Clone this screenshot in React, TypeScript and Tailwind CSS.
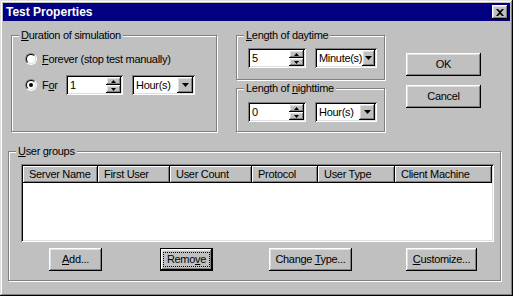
import React from 'react';

const raised =
  'shadow-[inset_-1px_-1px_#000,inset_1px_1px_#fff,inset_-2px_-2px_#808080,inset_2px_2px_#dfdfdf]';
const sunken =
  'shadow-[inset_1px_1px_#808080,inset_-1px_-1px_#fff,inset_2px_2px_#000,inset_-2px_-2px_#dfdfdf]';
const etched = 'border border-[#808080] shadow-[1px_1px_0_#fff,inset_1px_1px_0_#fff]';

const Group: React.FC<{ label: React.ReactNode; className: string; children?: React.ReactNode }> = ({
  label,
  className,
  children,
}) => (
  <div className={`relative ${etched} ${className}`}>
    <span className="absolute left-[7px] top-[-8px] bg-[#c0c0c0] px-[2px] leading-[14px]">{label}</span>
    {children}
  </div>
);

const Radio: React.FC<{ checked?: boolean }> = ({ checked }) => (
  <span className="flex h-[12px] w-[12px] shrink-0 items-center justify-center rounded-full border border-t-[#808080] border-l-[#808080] border-b-white border-r-white">
    <span className="flex h-[10px] w-[10px] items-center justify-center rounded-full border border-t-black border-l-black border-b-[#dfdfdf] border-r-[#dfdfdf] bg-white">
      {checked && <span className="h-[4px] w-[4px] rounded-full bg-black" />}
    </span>
  </span>
);

const Arrow: React.FC<{ up?: boolean; big?: boolean }> = ({ up, big }) => (
  <svg width={big ? 7 : 5} height={big ? 4 : 3} viewBox={big ? '0 0 7 4' : '0 0 5 3'}>
    {big ? (
      <path d="M0 0h7L3.5 4z" fill="#000" />
    ) : up ? (
      <path d="M2.5 0L5 3H0z" fill="#000" />
    ) : (
      <path d="M0 0h5L2.5 3z" fill="#000" />
    )}
  </svg>
);

const SpinEdit: React.FC<{ value: string; className: string }> = ({ value, className }) => (
  <div className={`flex h-[20px] items-stretch bg-white p-[2px] ${sunken} ${className}`}>
    <span className="flex-1 pl-[2px] leading-[16px]">{value}</span>
    <div className="flex w-[15px] flex-col">
      <span className={`flex flex-1 items-center justify-center bg-[#c0c0c0] ${raised}`}>
        <Arrow up />
      </span>
      <span className={`flex flex-1 items-center justify-center bg-[#c0c0c0] ${raised}`}>
        <Arrow />
      </span>
    </div>
  </div>
);

const Combo: React.FC<{ value: string; className: string }> = ({ value, className }) => (
  <div className={`flex h-[20px] items-stretch bg-white p-[2px] ${sunken} ${className}`}>
    <span className="flex-1 pl-[2px] leading-[16px]">{value}</span>
    <span className={`flex w-[16px] items-center justify-center bg-[#c0c0c0] ${raised}`}>
      <Arrow big />
    </span>
  </div>
);

const Btn: React.FC<{ children: React.ReactNode; className: string; focused?: boolean }> = ({
  children,
  className,
  focused,
}) =>
  focused ? (
    <div className={`h-[23px] border border-black ${className}`}>
      <div className={`flex h-full items-center justify-center bg-[#c0c0c0] ${raised}`}>
        <span className="border border-dotted border-black px-[3px] leading-[13px]">{children}</span>
      </div>
    </div>
  ) : (
    <div className={`flex h-[23px] items-center justify-center bg-[#c0c0c0] ${raised} ${className}`}>
      <span>{children}</span>
    </div>
  );

const columns = [
  { name: 'Server Name', w: 'w-[75px]' },
  { name: 'First User', w: 'w-[72px]' },
  { name: 'User Count', w: 'w-[82px]' },
  { name: 'Protocol', w: 'w-[66px]' },
  { name: 'User Type', w: 'w-[77px]' },
  { name: 'Client Machine', w: 'flex-1' },
];

export default function App() {
  return (
    <div className="h-[296px] w-[513px] overflow-hidden bg-[#c0c0c0] font-['Liberation_Sans',Arial,sans-serif] text-[11px] tracking-[-0.3px] text-black">
      <div className="flex h-full flex-col p-[3px] shadow-[inset_-1px_-1px_#000,inset_1px_1px_#dfdfdf,inset_-2px_-2px_#808080,inset_2px_2px_#fff]">
        {/* title bar */}
        <div className="flex h-[18px] items-center justify-between bg-[#000080] pl-[3px] pr-[2px]">
          <span className="text-[12px] font-bold tracking-normal text-white">Test Properties</span>
          <span className={`flex h-[14px] w-[16px] items-center justify-center bg-[#c0c0c0] ${raised}`}>
            <svg width="8" height="7" viewBox="0 0 8 7">
              <path d="M0 0h2l2 2 2-2h2L5 3.5 8 7H6L4 5 2 7H0l3-3.5z" fill="#000" />
            </svg>
          </span>
        </div>

        <div className="flex flex-col px-[5px]">
          {/* top row */}
          <div className="mt-[14px] flex items-start">
            <Group
              className="ml-[3px] h-[97px] w-[206px] pl-[13px] pt-[15px]"
              label={
                <>
                  <span className="underline">D</span>uration of simulation
                </>
              }
            >
              <div className="flex h-[16px] items-center">
                <Radio />
                <span className="ml-[5px]">
                  <span className="underline">F</span>orever (stop test manually)
                </span>
              </div>
              <div className="mt-[8px] flex h-[20px] items-center">
                <Radio checked />
                <span className="ml-[5px] w-[24px]">
                  F<span className="underline">o</span>r
                </span>
                <SpinEdit value="1" className="w-[57px]" />
                <Combo value="Hour(s)" className="ml-[9px] w-[63px]" />
              </div>
            </Group>

            <div className="ml-[19px] flex flex-col">
              <Group
                className="h-[45px] w-[149px] pl-[11px] pt-[12px]"
                label={
                  <>
                    <span className="underline">L</span>ength of daytime
                  </>
                }
              >
                <div className="flex">
                  <SpinEdit value="5" className="w-[58px]" />
                  <Combo value="Minute(s)" className="ml-[9px] w-[62px]" />
                </div>
              </Group>
              <Group
                className="mt-[8px] h-[44px] w-[149px] pl-[11px] pt-[13px]"
                label={
                  <>
                    Length of <span className="underline">n</span>ighttime
                  </>
                }
              >
                <div className="flex">
                  <SpinEdit value="0" className="w-[58px]" />
                  <Combo value="Hour(s)" className="ml-[9px] w-[62px]" />
                </div>
              </Group>
            </div>

            <div className="ml-[21px] mt-[18px] flex flex-col gap-[9px]">
              <Btn className="w-[75px]">OK</Btn>
              <Btn className="w-[75px]">Cancel</Btn>
            </div>
          </div>

          {/* user groups */}
          <Group
            className="mt-[19px] h-[130px] w-[493px] pl-[12px] pt-[12px]"
            label={
              <>
                <span className="underline">U</span>ser groups
              </>
            }
          >
            <div className={`flex h-[78px] w-[473px] flex-col bg-white p-[2px] ${sunken}`}>
              <div className="flex h-[17px]">
                {columns.map((c) => (
                  <div
                    key={c.name}
                    className={`${c.w} flex items-center bg-[#c0c0c0] pl-[6px] shadow-[inset_-1px_-1px_#000,inset_1px_1px_#fff,inset_-2px_-2px_#808080]`}
                  >
                    {c.name}
                  </div>
                ))}
              </div>
            </div>
            <div className="mt-[6px] flex">
              <Btn className="ml-[28px] w-[53px]">
                <span className="underline">A</span>dd...
              </Btn>
              <Btn focused className="ml-[58px] w-[53px]">
                Remo<span className="underline">v</span>e
              </Btn>
              <Btn className="ml-[56px] w-[83px]">
                Change <span className="underline">T</span>ype...
              </Btn>
              <Btn className="ml-[54px] w-[71px]">
                <span className="underline">C</span>ustomize...
              </Btn>
            </div>
          </Group>
        </div>
      </div>
    </div>
  );
}
